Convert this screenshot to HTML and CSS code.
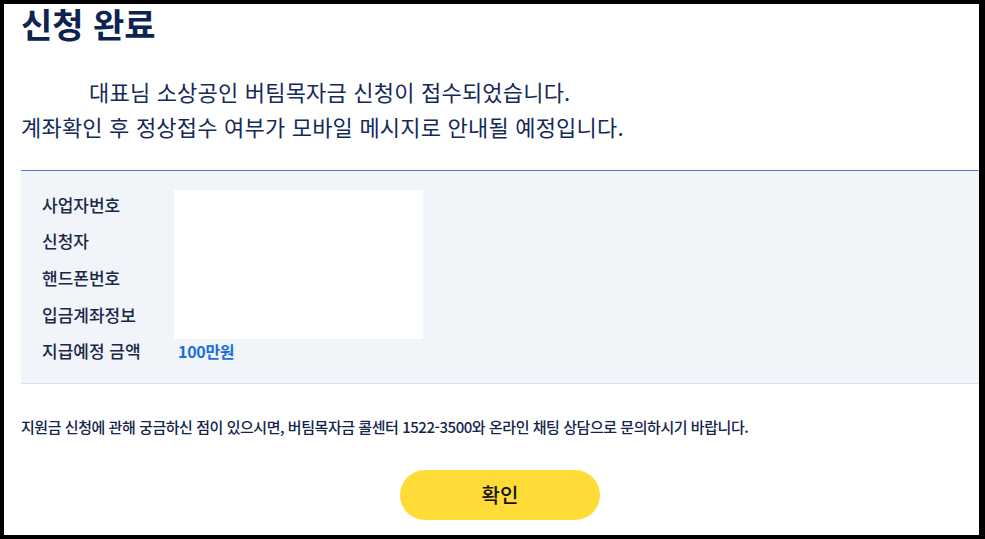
FILE: index.html
```html
<!DOCTYPE html>
<html lang="ko">
<head>
    <meta charset="UTF-8">
    <meta name="viewport" content="width=device-width, initial-scale=1.0">
    <title>신청 완료</title>
    <link rel="stylesheet" href="styles.css">
</head>
<body>
    <div class="panel">
        <h1>신청 완료</h1>

        <p class="lead">
            대표님 소상공인 버팀목자금 신청이 접수되었습니다.<br>
            계좌확인 후 정상접수 여부가 모바일 메시지로 안내될 예정입니다.
        </p>

        <!-- 신청 정보 -->
        <div class="info-box">
            <div class="info-grid">
                <div class="label">사업자번호</div>
                <div class="value masked"></div>
                <div class="label">신청자</div>
                <div class="label">핸드폰번호</div>
                <div class="label">입금계좌정보</div>
                <div class="label">지급예정 금액</div>
                <div class="value amount">100만원</div>
            </div>
        </div>

        <p class="notice">지원금 신청에 관해 궁금하신 점이 있으시면, 버팀목자금 콜센터 1522-3500와 온라인 채팅 상담으로 문의하시기 바랍니다.</p>

        <div class="actions">
            <button type="button">확인</button>
        </div>
    </div>
</body>
</html>
```

FILE: styles.css
```css
html, body {
    height: 100%;
}
body {
    margin: 0;
    padding: 4px 6px 4px 4px;
    box-sizing: border-box;
    background-color: #000;
    font-family: "Noto Sans CJK KR", "Noto Sans", sans-serif;
    color: #162a55;
    overflow: hidden;
}
.panel {
    height: 100%;
    background: #fff;
    padding-left: 17px;
    box-sizing: border-box;
}
h1 {
    margin: 0;
    font-size: 34px;
    line-height: 40px;
    font-weight: 700;
    color: #0d2350;
}
.lead {
    margin: 30px 0 0;
    font-size: 22px;
    line-height: 35px;
    letter-spacing: 0.2px;
    text-indent: 68px;
    color: #142a58;
}
.info-box {
    margin-top: 26px;
    border-top: 1px solid #5b6ff0;
    border-bottom: 1px solid #dde2ee;
    background-color: #f1f4f9;
    padding: 15px 0 14px 21px;
}
.info-grid {
    display: grid;
    grid-template-columns: 132px 249px;
    grid-auto-rows: 36.6px;
    align-items: center;
}
.label {
    grid-column: 1;
    font-size: 17px;
    font-weight: 500;
    color: #1a2848;
}
.value {
    grid-column: 2;
}
.masked {
    grid-row: 1 / span 4;
    align-self: start;
    margin-top: 4px;
    height: 149px;
    background: #fff;
}
.amount {
    grid-row: 5;
    padding-left: 4px;
    font-size: 16px;
    font-weight: 700;
    letter-spacing: -0.3px;
    color: #1b6fd8;
}
.notice {
    margin: 32px 0 0;
    font-size: 15px;
    line-height: 22px;
    font-weight: 500;
    letter-spacing: -0.45px;
    color: #13244a;
}
.actions {
    display: flex;
    justify-content: center;
    margin-top: 32px;
}
button {
    width: 200px;
    height: 50px;
    border: none;
    border-radius: 25px;
    background-color: #ffdb38;
    font-family: inherit;
    font-size: 20px;
    font-weight: 500;
    color: #111;
    cursor: pointer;
}
```
